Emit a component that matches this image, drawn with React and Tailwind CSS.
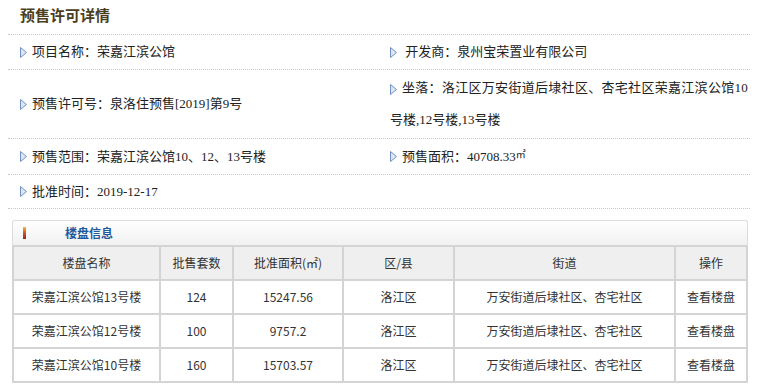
import React from "react";

const Arrow = () => (
  <svg width="7" height="11" viewBox="0 0 7 11" className="shrink-0 inline-block align-middle">
    <path d="M0.5 0.5 L6.5 5.5 L0.5 10.5 Z" fill="#dde6f3" stroke="#6f90c2" strokeWidth="1" strokeLinejoin="round" />
  </svg>
);

const infoFont = { fontFamily: '"Liberation Serif", "Noto Sans CJK SC", serif' };
const tableFont = { fontFamily: '"Noto Sans CJK SC", "Liberation Sans", sans-serif' };

function Item({ children }) {
  return (
    <div className="flex items-center gap-[5px] text-[13px] text-[#222]">
      <Arrow />
      <span>{children}</span>
    </div>
  );
}

const rows = [
  ["荣嘉江滨公馆13号楼", "124", "15247.56", "洛江区", "万安街道后埭社区、杏宅社区", "查看楼盘"],
  ["荣嘉江滨公馆12号楼", "100", "9757.2", "洛江区", "万安街道后埭社区、杏宅社区", "查看楼盘"],
  ["荣嘉江滨公馆10号楼", "160", "15703.57", "洛江区", "万安街道后埭社区、杏宅社区", "查看楼盘"],
];

export default function App() {
  return (
    <div className="w-[760px] h-[392px] bg-white overflow-hidden" style={infoFont}>
      <div className="ml-[8px] w-[742px]">
        <div className="h-[35px] flex items-center pl-[12px] pb-[3px] border-b border-dotted border-[#c8c8c8]">
          <span className="text-[15px] font-bold text-[#4b3e1c]" style={{ fontFamily: '"Noto Sans CJK SC", sans-serif' }}>预售许可详情</span>
        </div>
        <div className="grid grid-cols-[382px_1fr] h-[35px] border-b border-dotted border-[#c8c8c8]">
          <div className="pl-[12px] flex items-center"><Item>项目名称：荣嘉江滨公馆</Item></div>
          <div className="flex items-center"><Item>&nbsp;开发商：泉州宝荣置业有限公司</Item></div>
        </div>
        <div className="grid grid-cols-[382px_1fr] h-[69px] border-b border-dotted border-[#c8c8c8]">
          <div className="pl-[12px] flex items-center"><Item>预售许可号：泉洛住预售[2019]第9号</Item></div>
          <div className="flex items-center">
            <div className="text-[13px] leading-[32px] text-[#222] whitespace-nowrap">
              <Arrow />
              <span className="ml-[5px] tracking-[0.3px]">坐落：洛江区万安街道后埭社区、杏宅社区荣嘉江滨公馆10</span>
              <br />
              <span>号楼,12号楼,13号楼</span>
            </div>
          </div>
        </div>
        <div className="grid grid-cols-[382px_1fr] h-[36px] border-b border-dotted border-[#c8c8c8]">
          <div className="pl-[12px] flex items-center"><Item>预售范围：荣嘉江滨公馆10、12、13号楼</Item></div>
          <div className="flex items-center">
            <Item>
              预售面积：40708.33<span className="text-[10px] align-top">㎡</span>
            </Item>
          </div>
        </div>
        <div className="grid grid-cols-[382px_1fr] h-[34px] border-b border-dotted border-[#c8c8c8]">
          <div className="pl-[12px] flex items-center"><Item>批准时间：2019-12-17</Item></div>
          <div />
        </div>
      </div>

      <div className="ml-[12px] mt-[11px] w-[736px]" style={tableFont}>
        <div className="h-[25px] flex items-center border border-b-0 border-[#dcdcdc] rounded-t-[3px] bg-gradient-to-b from-white to-[#f1f1f1]">
          <div className="ml-[10px] w-[3px] h-[12px] bg-gradient-to-b from-[#f2b64a] via-[#d0502a] to-[#a8201c]" />
          <span className="ml-[39px] text-[12px] font-bold text-[#23579c]">楼盘信息</span>
        </div>
        <div className="grid grid-cols-[145px_71px_108px_109px_219px_70px] gap-[2px] p-[2px] bg-[#d4d4d4] text-[12px] text-[#333]">
          {["楼盘名称", "批售套数", "批准面积(㎡)", "区/县", "街道", "操作"].map((h) => (
            <div key={h} className="h-[32px] bg-[#efefef] flex items-center justify-center">{h}</div>
          ))}
          {rows.map((r, i) =>
            r.map((c, j) => (
              <div key={i + "-" + j} className="h-[32px] bg-white flex items-center justify-center">{c}</div>
            ))
          )}
        </div>
      </div>
    </div>
  );
}
